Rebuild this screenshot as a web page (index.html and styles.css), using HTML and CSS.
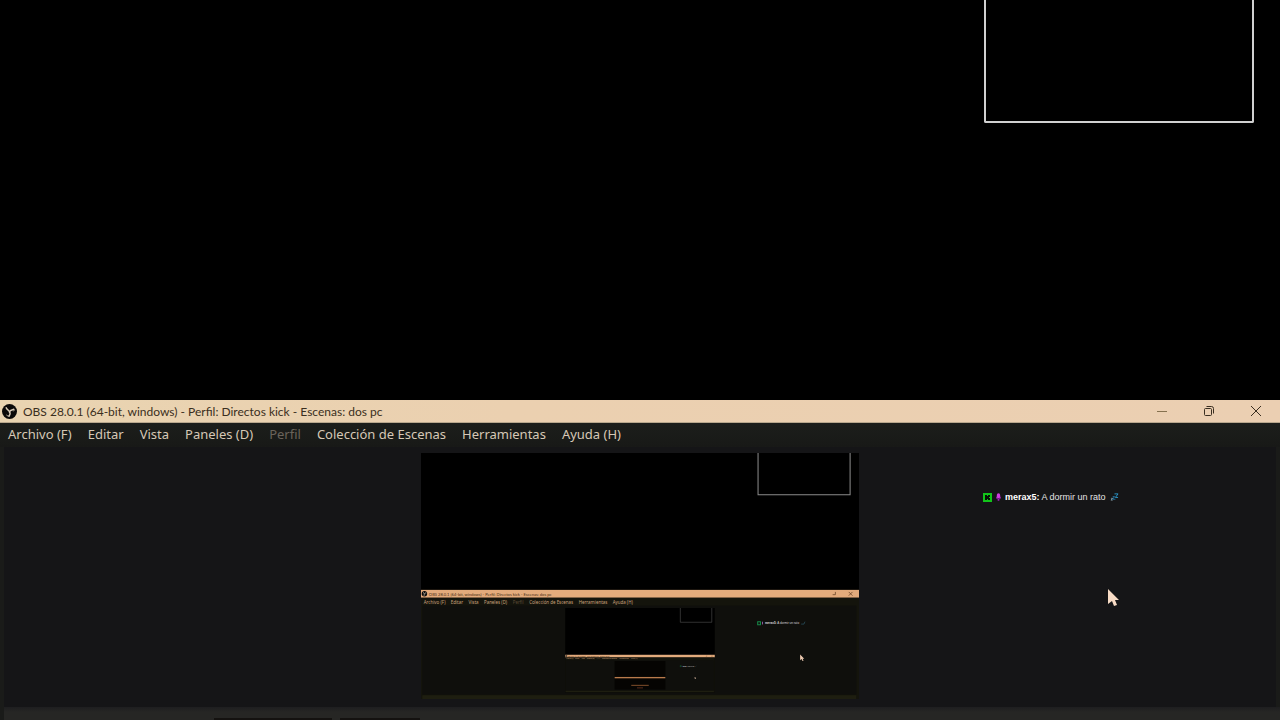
FILE: index.html
```html
<!DOCTYPE html>
<html lang="es">
<head>
    <meta charset="UTF-8">
    <meta name="viewport" content="width=device-width, initial-scale=1.0">
    <title>OBS 28.0.1</title>
    <link rel="stylesheet" href="styles.css">
</head>
<body>

    <div class="desktop">
        <div class="frame"></div>
    </div>

    <main class="window">
        <header class="titlebar">
            <svg class="logo" viewBox="0 0 32 32" aria-hidden="true">
                <g id="obs-logo">
                    <circle cx="16" cy="16" r="16" fill="#0b0a09"/>
                    <g fill="none" stroke="#d8cbb8" stroke-linecap="round">
                        <path d="M16 17c-1-5-6-4-7-9" stroke-width="3"/>
                        <path d="M16 17c2-6 6-3 9-6" stroke-width="3"/>
                        <path d="M16 17c3 3 1 6-1 9" stroke-width="3"/>
                        <path d="M25 11c1 1 1 3 0 4M15 26c-2 0-4-1-5-2" stroke-width="2"/>
                    </g>
                </g>
            </svg>
            <h1>OBS 28.0.1 (64-bit, windows) - Perfil: Directos kick - Escenas: dos pc</h1>
            <div class="controls">
                <button type="button" aria-label="Minimizar">
                    <svg viewBox="0 0 12 12"><path d="M1 6.500h10" stroke="#85714f"/></svg>
                </button>
                <button type="button" aria-label="Restaurar">
                    <svg viewBox="0 0 12 12"><rect x="1.500" y="3.500" width="7" height="7" rx="1"/><path d="M3.500 1.500h5a2 2 0 0 1 2 2v5"/></svg>
                </button>
                <button type="button" aria-label="Cerrar">
                    <svg viewBox="0 0 12 12"><path d="M1 1l10 10M11 1L1 11"/></svg>
                </button>
            </div>
        </header>

        <nav class="menubar">
            <button type="button">Archivo (F)</button>
            <button type="button">Editar</button>
            <button type="button">Vista</button>
            <button type="button">Paneles (D)</button>
            <button type="button" disabled>Perfil</button>
            <button type="button">Colección de Escenas</button>
            <button type="button">Herramientas</button>
            <button type="button">Ayuda (H)</button>
        </nav>

        <section class="workspace">
            <!-- The capture shows the desktop inside itself, one level per nested <svg> -->
            <svg class="preview" viewBox="0 0 1280 720">
                <defs>
                    <g id="screen">
                        <rect width="1280" height="720" fill="#000"/>
                        <path class="p-frame" d="M985 0v122h269V0"/>
                        <rect y="400" width="1280" height="23" fill="#e3ab7c"/>
                        <rect y="423" width="1280" height="297" fill="#14140c"/>
                        <rect x="4" y="446" width="1268" height="260" fill="#0f0f0c"/>
                        <rect x="4" y="708" width="1268" height="12" fill="#1e1e10"/>
                        <use href="#obs-logo" transform="translate(2 403) scale(.5)"/>
                        <text class="p-title" x="23" y="417">OBS 28.0.1 (64-bit, windows) - Perfil: Directos kick - Escenas: dos pc</text>
                        <path class="p-icon" d="M1203 414h8v-8M1250 406l11 11M1261 406l-11 11"/>
                        <g class="p-menu">
                            <text x="8" y="440">Archivo (F)</text>
                            <text x="87" y="440">Editar</text>
                            <text x="139" y="440">Vista</text>
                            <text x="184" y="440">Paneles (D)</text>
                            <text class="p-off" x="268" y="440">Perfil</text>
                            <text x="316" y="440">Colección de Escenas</text>
                            <text x="461" y="440">Herramientas</text>
                            <text x="560" y="440">Ayuda (H)</text>
                        </g>
                        <path d="M984 493h8v9h-8z" fill="none" stroke="#178a4a" stroke-width="3"/>
                        <path d="M998 493v8" stroke="#8a5a9a" stroke-width="3"/>
                        <text class="p-chat" x="1005" y="501"><tspan font-weight="bold">merax5:</tspan> A dormir un rato</text>
                        <path d="M1111 500h8l3-7" fill="none" stroke="#2c5a6a" stroke-width="2"/>
                        <path d="M1108 589v17l4-4 3 6 3-1-3-6h5z" fill="#f0cdb4"/>
                    </g>
                </defs>
                <use href="#screen"/>
                <svg x="421" y="453" width="438" height="246" viewBox="0 0 1280 720">
                    <use href="#screen"/>
                    <svg x="421" y="453" width="438" height="246" viewBox="0 0 1280 720">
                        <rect width="1280" height="720" fill="#050402"/>
                        <rect y="400" width="1280" height="34" fill="#b97b4c"/>
                        <rect x="421" y="598" width="438" height="22" fill="#8f5730"/>
                        <rect x="565" y="664" width="150" height="20" fill="#6b3722"/>
                    </svg>
                </svg>
            </svg>

            <div class="side">
                <p class="chat">
                    <svg class="badge" viewBox="0 0 9 9" aria-hidden="true">
                        <rect width="9" height="9" fill="#12c41a"/>
                        <path d="M2 2h2v1h1V2h2v2H6v1h1v2H5V6H4v1H2z" fill="#061206"/>
                    </svg>
                    <svg class="mic" viewBox="0 0 6 10" aria-hidden="true">
                        <rect x="1" width="4" height="6" rx="2" fill="#d03be0"/>
                        <path d="M0 4h1c0 3 4 3 4 0h1c0 2-1 3-2 3v2H2V7C1 7 0 6 0 4z" fill="#9a1fb4"/>
                    </svg>
                    <span><strong>merax5:</strong> A dormir un rato</span>
                    <svg class="zzz" viewBox="0 0 10 9" aria-hidden="true">
                        <path d="M5 1h4L6 5h3" stroke="#2c9fd6"/>
                        <path d="M3 4h2L3 7h3" stroke="#2379a8"/>
                        <path d="M1 6h2L1 8h2" stroke="#7f98a5"/>
                    </svg>
                </p>
                <svg class="cursor" viewBox="0 0 11 17" aria-hidden="true">
                    <path d="M0 0v15l4-3 2 5 3-1-2-5h4z" fill="#f8dcc6"/>
                </svg>
            </div>
        </section>

        <footer class="docks">
            <span class="dock"></span>
            <span class="dock dock-small"></span>
        </footer>
    </main>

</body>
</html>
```
FILE: styles.css
```css
* { box-sizing: border-box; }
body {
    display: flex;
    flex-direction: column;
    height: 100vh;
    margin: 0;
    overflow: hidden;
    background: #000;
    font-family: "Noto Sans", "Open Sans", sans-serif;
}
button {
    padding: 0;
    border: none;
    background: none;
    font: inherit;
    color: inherit;
}

.desktop {
    flex: 5;
    display: flex;
    justify-content: flex-end;
    align-items: flex-start;
    padding-right: 26px;
}
.frame {
    width: 270px;
    height: 123px;
    border: 2px solid #d0d0d0;
    border-top: none;
    border-radius: 0 0 2px 2px;
}

.window {
    flex: 4;
    display: flex;
    flex-direction: column;
    background: #1a1b19;
}
.titlebar {
    display: flex;
    align-items: center;
    height: 23px;
    padding: 0 1px 0 2px;
    background: linear-gradient(90deg, #e9d4b1, #ebd0b0 40%, #ebcfb2);
    border-bottom: 1px solid #b8a78d;
    color: #3a2e20;
}
.logo { width: 15px; height: 15px; }
.titlebar h1 {
    flex: 1;
    margin: 0 0 0 6px;
    font: 12px Lato, sans-serif;
}
.controls { display: flex; }
.controls button {
    display: flex;
    justify-content: center;
    width: 47px;
}
.controls svg {
    width: 12px;
    height: 12px;
    fill: none;
    stroke: #3a2e20;
}

.menubar {
    display: flex;
    align-items: center;
    gap: 16px;
    height: 24px;
    padding: 0 8px 2px;
    background: linear-gradient(#1c1e1b, #181917);
    color: #d6c8b6;
    font-size: 13px;
}
.menubar button:disabled { color: #6b645b; }

.workspace {
    flex: 1;
    display: grid;
    grid-template-columns: 1fr 438px 1fr;
    margin: 0 4px;
    padding-top: 6px;
    background: #151517;
}
.preview {
    grid-column: 2;
    width: 100%;
}
.side { position: relative; }
.chat {
    display: flex;
    align-items: center;
    gap: 4px;
    margin: 37px 0 0 124px;
    color: #e4e4e4;
    font: 9px/14px "Liberation Sans", sans-serif;
}
.chat strong { color: #fff; }
.badge { width: 9px; height: 9px; }
.mic { width: 5px; height: 9px; }
.zzz { width: 9px; height: 8px; fill: none; }
.cursor {
    position: absolute;
    top: 136px;
    left: 249px;
    width: 11px;
    height: 17px;
}

.docks {
    display: flex;
    gap: 8px;
    height: 13px;
    margin-left: 4px;
    padding: 11px 0 0 210px;
    background: linear-gradient(#1e1e20, #262624 5px);
}
.dock {
    width: 118px;
    background: #141210;
}
.dock-small { width: 80px; }

.p-frame { fill: none; stroke: #8a8a8a; stroke-width: 3; }
.p-title { fill: #4a2c14; font: 12px Lato, sans-serif; }
.p-icon { fill: none; stroke: #5a381c; stroke-width: 2; }
.p-menu { fill: #cba27c; font-size: 13px; }
.p-off { fill: #5c4a36; }
.p-chat { fill: #d8d8d8; font: 9px "Liberation Sans", sans-serif; }
```
